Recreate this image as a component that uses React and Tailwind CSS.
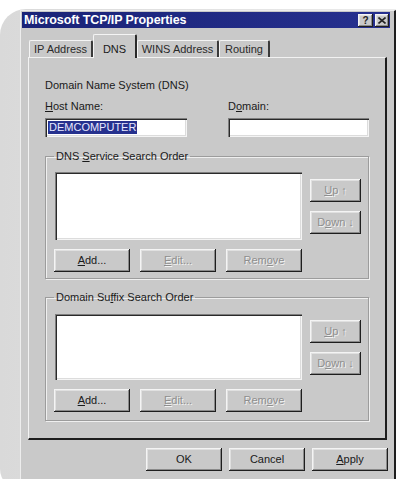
import React from "react";

const raised =
  "shadow-[inset_-1px_-1px_0_#1e1e1e,inset_1px_1px_0_#f4f4f4,inset_-2px_-2px_0_#8a8a8a,inset_2px_2px_0_#e0e0e0]";
const sunken =
  "shadow-[inset_1px_1px_0_#7e7e7e,inset_2px_2px_0_#2a2a2a,inset_-1px_-1px_0_#f4f4f4,inset_-2px_-2px_0_#dcdcdc]";

const Btn = ({ children, disabled, w = "w-[76px]", h = "h-[23px]" }) => (
  <div
    className={`${w} ${h} ${raised} bg-[#c9c9c9] flex items-center justify-center text-[11px] ${
      disabled
        ? "text-[#8e8e8e] [text-shadow:1px_1px_0_#f2f2f2]"
        : "text-[#1a1a1a]"
    }`}
  >
    {children}
  </div>
);

const Tab = ({ children, selected, w }) =>
  selected ? (
    <div
      className={`${w} h-[24px] -mb-[1px] relative z-10 bg-[#c9c9c9] border-l border-t border-[#f4f4f4] border-r-2 border-r-[#2a2a2a] rounded-t-[2px] flex items-start justify-center pt-[6px] text-[11px] text-[#1a1a1a]`}
    >
      {children}
    </div>
  ) : (
    <div
      className={`${w} h-[17px] bg-[#c9c9c9] border-l border-t border-[#f4f4f4] border-r-2 border-r-[#3a3a3a] rounded-t-[2px] flex items-center justify-center text-[11px] text-[#2a2a2a]`}
    >
      {children}
    </div>
  );

const SearchGroup = ({ legend, listTop, listH, upTop, rowTop, bottom }) => (
  <fieldset className="w-[324px] border border-[#9c9c9c] shadow-[inset_1px_1px_0_#efefef,1px_1px_0_#efefef] m-0 p-0">
    <legend className="ml-[8px] px-[2px] text-[11px] leading-[12px] text-[#1a1a1a]">
      {legend}
    </legend>
    <div className="flex items-start pl-[9px]">
      <div className={`w-[247px] ${listH} ${listTop} bg-white ${sunken}`} />
      <div className={`ml-[8px] flex flex-col gap-[9px] ${upTop}`}>
        <Btn disabled w="w-[51px]">
          <span>
            <u>U</u>p ↑
          </span>
        </Btn>
        <Btn disabled w="w-[51px]">
          <span>
            D<u>o</u>wn ↓
          </span>
        </Btn>
      </div>
    </div>
    <div className={`flex gap-[10px] pl-[8px] ${rowTop} ${bottom}`}>
      <Btn>
        <span>
          <u>A</u>dd...
        </span>
      </Btn>
      <Btn disabled>
        <span>
          <u>E</u>dit...
        </span>
      </Btn>
      <Btn disabled>
        <span>
          Rem<u>o</u>ve
        </span>
      </Btn>
    </div>
  </fieldset>
);

export default function App() {
  return (
    <div className="w-[401px] h-[479px] bg-white pt-[9px] pr-[5px] overflow-hidden font-['Liberation_Sans',Arial,sans-serif]">
      <div className="h-[480px] rounded-tl-[26px] rounded-bl-[20px] bg-gradient-to-r from-[#d9d9d9] to-[#ebebeb] pl-[20px] pt-[1px]">
        <div className="w-[376px] h-[475px] bg-[#c9c9c9] border-l border-t border-[#ededed] border-r-2 border-r-[#1e1e1e] pt-[1px] pl-[1px] pr-[4px] flex flex-col">
          {/* title bar */}
          <div className="h-[16px] bg-gradient-to-r from-[#1a2377] to-[#26308f] flex items-center justify-between pl-[2px] pr-[1px]">
            <span className="text-white text-[12.5px] leading-[14px] font-bold tracking-[-0.1px]">
              Microsoft TCP/IP Properties
            </span>
            <div className="flex gap-[2px]">
              <div className={`w-[15px] h-[13px] bg-[#c9c9c9] ${raised} flex items-center justify-center text-[10px] font-bold text-[#222]`}>
                ?
              </div>
              <div className={`w-[14px] h-[13px] bg-[#c9c9c9] ${raised} flex items-center justify-center`}>
                <svg width="8" height="7" viewBox="0 0 8 7">
                  <path d="M0.5 0.5 L7.5 6.5 M7.5 0.5 L0.5 6.5" stroke="#222" strokeWidth="1.6" />
                </svg>
              </div>
            </div>
          </div>

          {/* tabs */}
          <div className="mt-[6px] ml-[7px] flex items-end">
            <Tab w="w-[64px]">IP Address</Tab>
            <Tab w="w-[44px]" selected>
              DNS
            </Tab>
            <Tab w="w-[82px]">WINS Address</Tab>
            <Tab w="w-[51px]">Routing</Tab>
          </div>

          {/* page */}
          <div className="ml-[6px] w-[359px] h-[383px] bg-[#c9c9c9] border-l border-t border-[#f2f2f2] border-r-2 border-b-2 border-r-[#1e1e1e] border-b-[#1e1e1e] pl-[16px] pt-[21px]">
            <div className="text-[11px] leading-[13px] text-[#1a1a1a]">
              Domain Name System (DNS)
            </div>
            <div className="flex mt-[8px]">
              <div className="w-[183px]">
                <div className="text-[11px] leading-[13px] text-[#1a1a1a]">
                  <u>H</u>ost Name:
                </div>
                <div className={`mt-[5px] w-[142px] h-[19px] bg-white ${sunken} flex items-center pl-[3px]`}>
                  <span className="bg-[#26318e] text-[#e8e8ff] text-[11px] leading-[13px] px-[1px]">
                    DEMCOMPUTER
                  </span>
                </div>
              </div>
              <div>
                <div className="text-[11px] leading-[13px] text-[#1a1a1a]">
                  D<u>o</u>main:
                </div>
                <div className={`mt-[5px] w-[141px] h-[19px] bg-white ${sunken}`} />
              </div>
            </div>

            <div className="mt-[13px]">
              <SearchGroup
                legend={
                  <span>
                    DNS <u>S</u>ervice Search Order
                  </span>
                }
                listTop="mt-[10px]"
                listH="h-[68px]"
                upTop="mt-[17px]"
                rowTop="mt-[9px]"
                bottom="pb-[6px]"
              />
            </div>

            <div className="mt-[12px]">
              <SearchGroup
                legend={
                  <span>
                    Domain Su<u>f</u>fix Search Order
                  </span>
                }
                listTop="mt-[11px]"
                listH="h-[66px]"
                upTop="mt-[17px]"
                rowTop="mt-[9px]"
                bottom="pb-[8px]"
              />
            </div>
          </div>

          {/* footer */}
          <div className="mt-[8px] ml-[124px] flex gap-[7px]">
            <Btn>OK</Btn>
            <Btn>Cancel</Btn>
            <Btn>
              <span>
                <u>A</u>pply
              </span>
            </Btn>
          </div>
        </div>
      </div>
    </div>
  );
}
